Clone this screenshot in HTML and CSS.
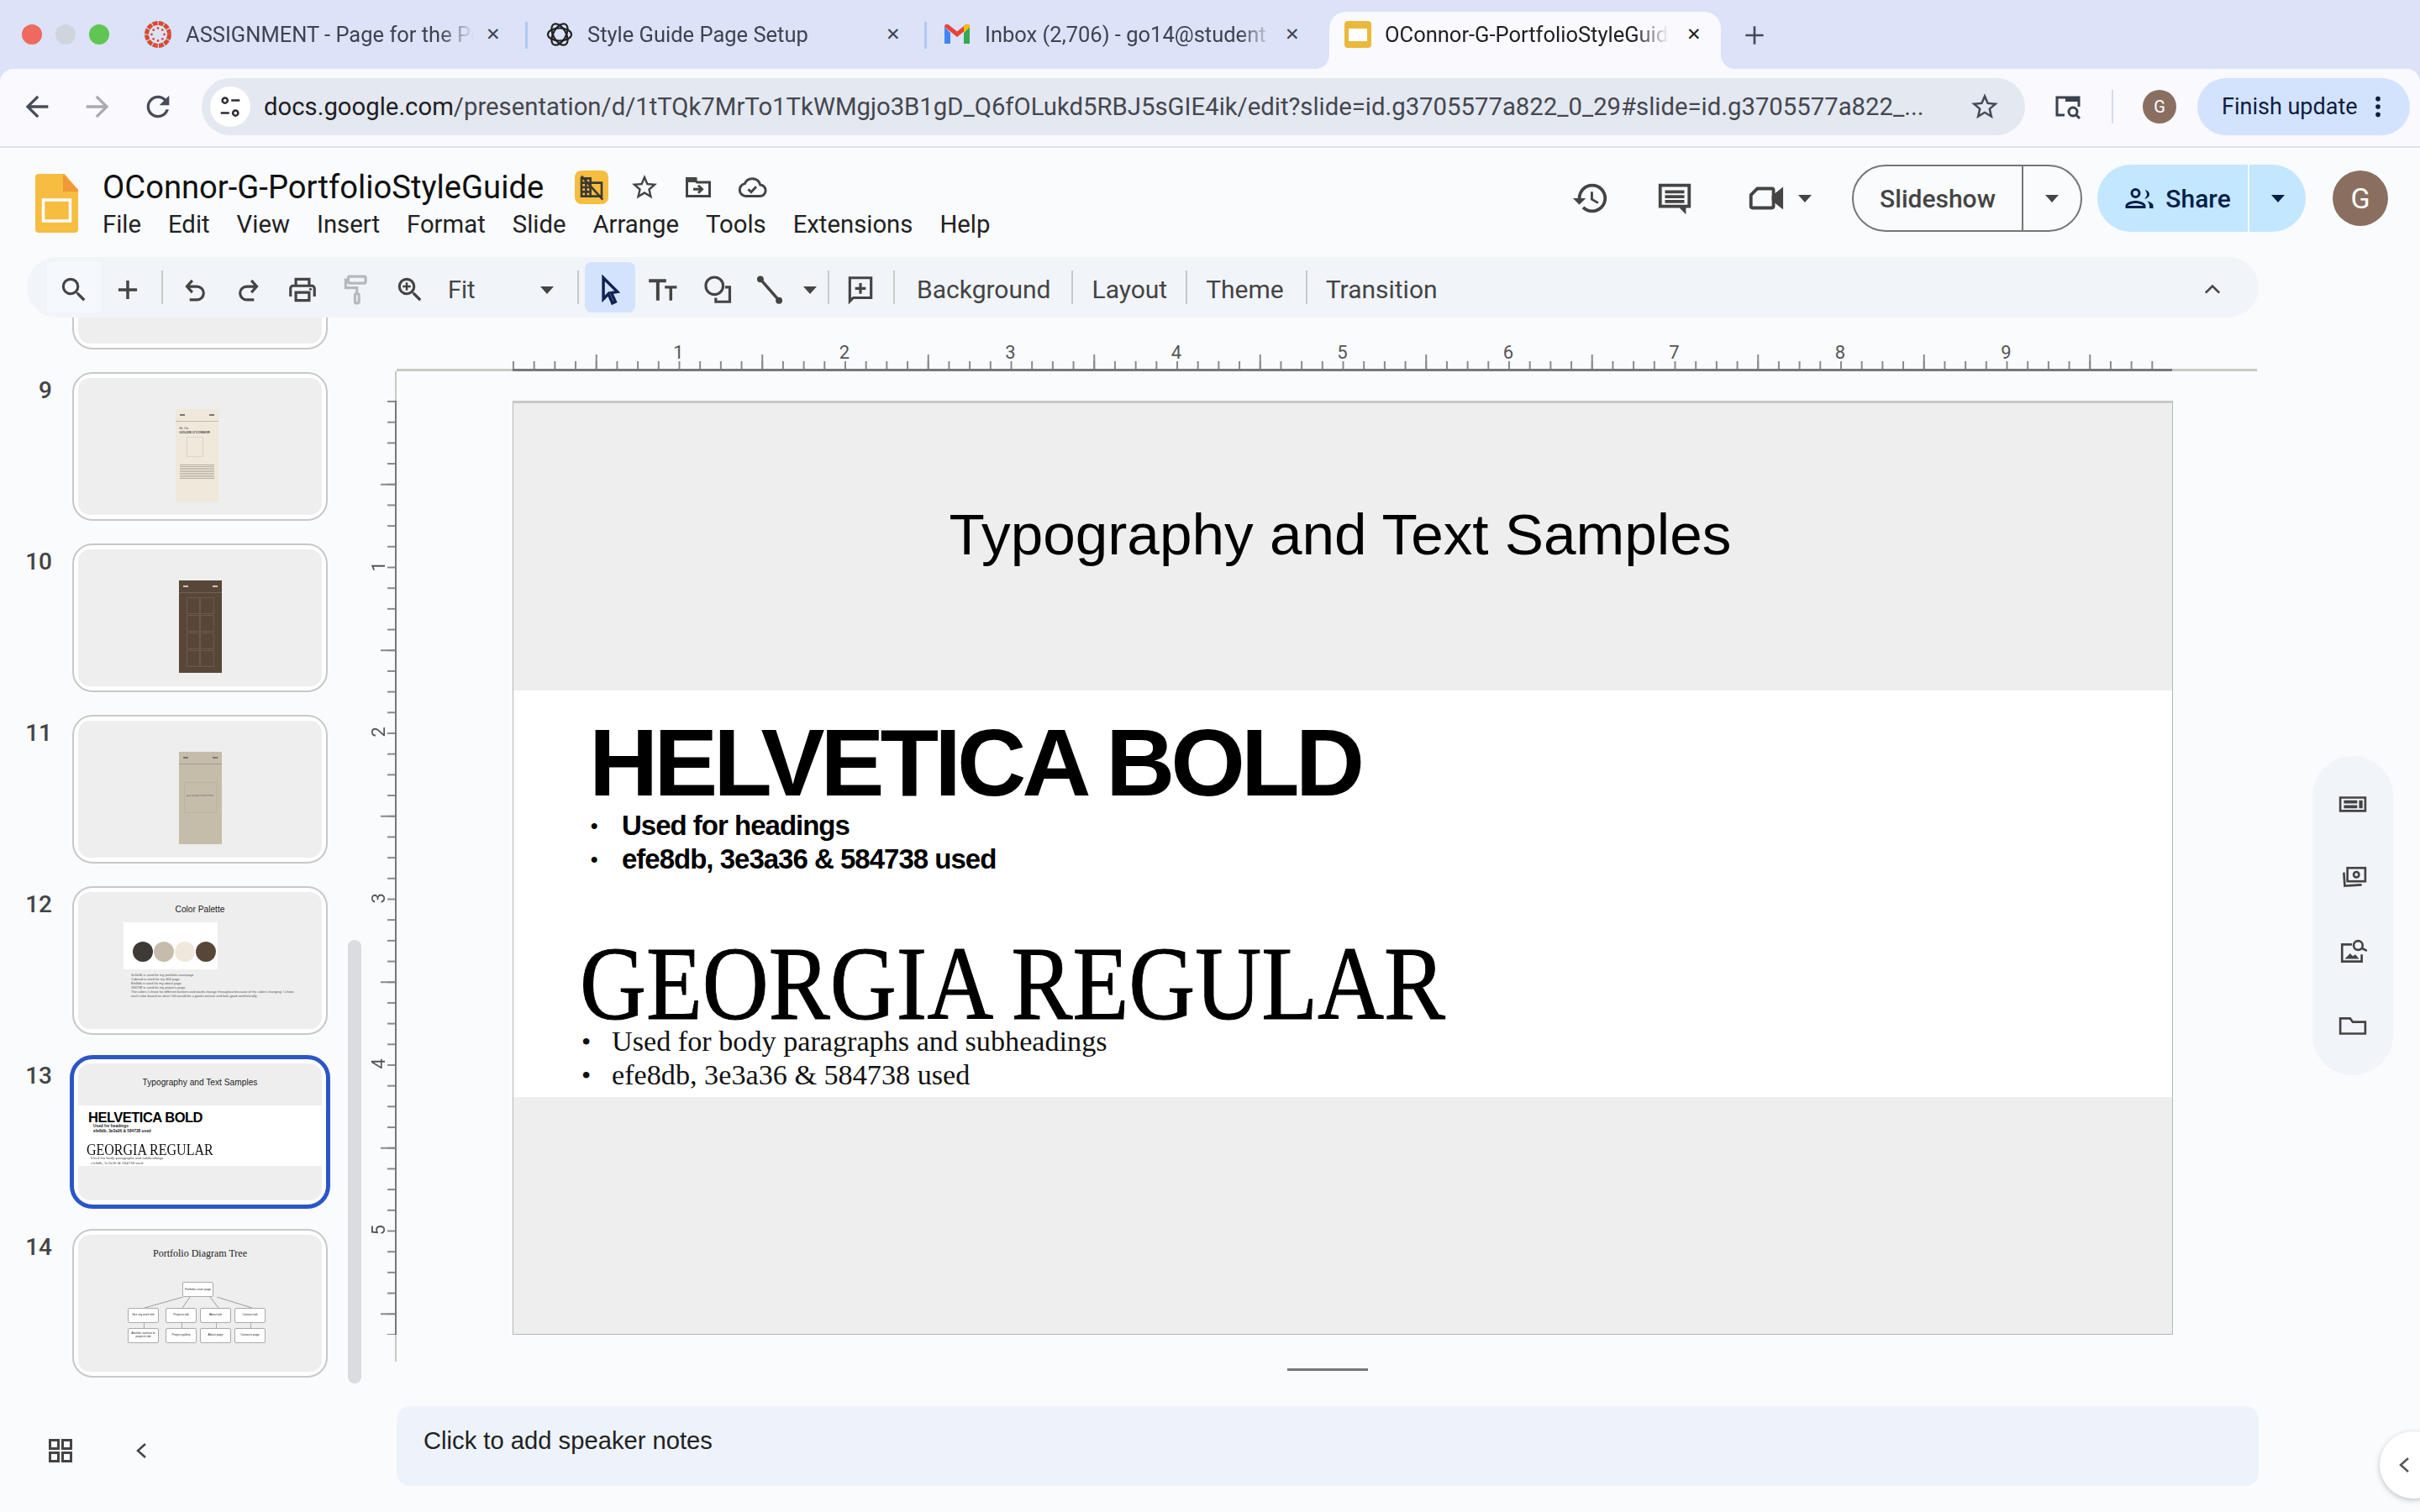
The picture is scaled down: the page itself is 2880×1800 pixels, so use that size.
FILE: index.html
```html
<!DOCTYPE html>
<html lang="en">
<head>
    <meta charset="UTF-8">
    <title>OConnor-G-PortfolioStyleGuide</title>
    <link rel="stylesheet" href="styles.css">
</head>
<body>
    <div class="tabstrip">
        <div class="lights">
            <span class="light red"></span>
            <span class="light gray"></span>
            <span class="light green"></span>
        </div>
        <div class="tab tab-one">
            <svg class="favicon" viewBox="0 0 32 32">
                <circle cx="16" cy="16" r="13.5" fill="none" stroke="#d64b32" stroke-width="5" stroke-dasharray="6 1.1"/>
                <circle cx="16" cy="8.5" r="1.4" fill="#d64b32"/><circle cx="16" cy="23.5" r="1.4" fill="#d64b32"/>
                <circle cx="8.5" cy="16" r="1.4" fill="#d64b32"/><circle cx="23.5" cy="16" r="1.4" fill="#d64b32"/>
                <circle cx="10.7" cy="10.7" r="1.4" fill="#d64b32"/><circle cx="21.3" cy="10.7" r="1.4" fill="#d64b32"/>
                <circle cx="10.7" cy="21.3" r="1.4" fill="#d64b32"/><circle cx="21.3" cy="21.3" r="1.4" fill="#d64b32"/>
            </svg>
            <span class="tab-title">ASSIGNMENT - Page for the Portfolio</span>
            <span class="tab-close">&#10005;</span>
        </div>
        <span class="tab-sep"></span>
        <div class="tab tab-two">
            <svg class="favicon" viewBox="0 0 32 32" fill="none" stroke="#222" stroke-width="2.2">
                <ellipse cx="16" cy="16" rx="14" ry="7.5"/>
                <ellipse cx="16" cy="16" rx="14" ry="7.5" transform="rotate(60 16 16)"/>
                <ellipse cx="16" cy="16" rx="14" ry="7.5" transform="rotate(120 16 16)"/>
            </svg>
            <span class="tab-title">Style Guide Page Setup</span>
            <span class="tab-close">&#10005;</span>
        </div>
        <span class="tab-sep"></span>
        <div class="tab tab-three">
            <svg class="favicon" viewBox="0 0 32 32">
                <path d="M1 7v20h7V14z" fill="#4285f4"/>
                <path d="M24 14v13h7V7z" fill="#34a853"/>
                <path d="M1 7c0-3 3-4 5-2.500l10 8 10-8c2-1.500 5-.5 5 2.500l-15 12z" fill="#ea4335"/>
                <path d="M24 5.500l2-1c2-1.500 5-.5 5 2.500l-7 7z" fill="#fbbc04"/>
            </svg>
            <span class="tab-title">Inbox (2,706) - go14@student</span>
            <span class="tab-close">&#10005;</span>
        </div>
        <div class="tab tab-active">
            <svg class="favicon" viewBox="0 0 32 32">
                <rect width="32" height="32" rx="4" fill="#eab93b"/>
                <rect x="5" y="9" width="22" height="15" fill="#fff"/>
            </svg>
            <span class="tab-title">OConnor-G-PortfolioStyleGuide</span>
            <span class="tab-close dark">&#10005;</span>
        </div>
        <span class="tab-new">
            <svg viewBox="0 0 24 24" width="32" height="32"><path d="M12 4v16M4 12h16" stroke="#444a57" stroke-width="2"/></svg>
        </span>
    </div>

    <div class="browserbar">
        <svg class="nav-icon" viewBox="0 0 24 24"><path fill="#474c58" d="M20 11H7.830l5.590-5.590L12 4l-8 8 8 8 1.410-1.410L7.830 13H20z"/></svg>
        <svg class="nav-icon" viewBox="0 0 24 24"><path fill="#a9abb0" d="M12 4l-1.410 1.410L16.170 11H4v2h12.170l-5.580 5.590L12 20l8-8z"/></svg>
        <svg class="nav-icon" viewBox="0 0 24 24"><path fill="#474c58" d="M17.650 6.350A7.958 7.958 0 0 0 12 4c-4.420 0-7.990 3.580-7.990 8s3.570 8 7.990 8c3.730 0 6.840-2.550 7.730-6h-2.080A5.990 5.990 0 0 1 12 18c-3.310 0-6-2.690-6-6s2.690-6 6-6c1.660 0 3.140.69 4.220 1.780L13 11h7V4z"/></svg>
        <div class="omnibox">
            <span class="site-info">
                <svg viewBox="0 0 24 24" width="30" height="30" fill="none" stroke="#2b2d33" stroke-width="2">
                    <circle cx="7" cy="6" r="2.500"/><path d="M13 6h8M3 18h8"/><circle cx="17" cy="18" r="2.500"/>
                </svg>
            </span>
            <span class="url"><b>docs.google.com</b>/presentation/d/1tTQk7MrTo1TkWMgjo3B1gD_Q6fOLukd5RBJ5sGIE4ik/edit?slide=id.g3705577a822_0_29#slide=id.g3705577a822_...</span>
            <svg class="star" viewBox="0 0 24 24"><path fill="#444a57" d="M22 9.240l-7.190-.62L12 2 9.190 8.630 2 9.240l5.460 4.730L5.820 21 12 17.270 18.180 21l-1.630-7.030zM12 15.400l-3.760 2.270 1-4.280-3.320-2.880 4.380-.38L12 6.100l1.710 4.040 4.380.38-3.320 2.880 1 4.280z"/></svg>
        </div>
        <svg class="tabsearch" viewBox="0 0 36 36" fill="none" stroke="#3b414e" stroke-width="3">
            <path d="M14 28H5V7h26v11"/><path d="M15 7h16v5H15z" fill="#3b414e" stroke="none"/><circle cx="24" cy="24" r="5"/><path d="M28 28l4 4"/>
        </svg>
        <span class="bar-sep"></span>
        <span class="avatar small">G</span>
        <div class="finish">
            <span>Finish update</span>
            <svg viewBox="0 0 8 32" width="8" height="30" fill="#0f1c3f"><circle cx="4" cy="6" r="3"/><circle cx="4" cy="16" r="3"/><circle cx="4" cy="26" r="3"/></svg>
        </div>
    </div>

    <header class="docheader">
        <svg class="slides-logo" viewBox="0 0 51 70">
            <path d="M4 0h31l16 19v47a4 4 0 0 1-4 4H4a4 4 0 0 1-4-4V4a4 4 0 0 1 4-4z" fill="#f6bd41"/>
            <path d="M33 0l18 19v2H33z" fill="#ef9a36"/>
            <rect x="9.500" y="31" width="32" height="25" fill="none" stroke="#fff" stroke-width="3.500"/>
        </svg>
        <div class="doc-info">
            <div class="doc-title-row">
                <span class="doc-title">OConnor-G-PortfolioStyleGuide</span>
                <span class="badge">
                    <svg viewBox="0 0 24 24" width="32" height="32"><path fill="#3c3a2f" d="M12 7V3H2v18h20V7zM6 19H4v-2h2zm0-4H4v-2h2zm0-4H4V9h2zm0-4H4V5h2zm4 12H8v-2h2zm0-4H8v-2h2zm0-4H8V9h2zm0-4H8V5h2zm10 12h-8V9h8z"/><path d="M3 2l19 21" stroke="#3c3a2f" stroke-width="2"/></svg>
                </span>
                <svg class="title-icon" viewBox="0 0 24 24"><path fill="#444" d="M22 9.240l-7.190-.62L12 2 9.190 8.630 2 9.240l5.460 4.730L5.820 21 12 17.270 18.180 21l-1.630-7.030zM12 15.400l-3.760 2.270 1-4.280-3.320-2.880 4.380-.38L12 6.100l1.710 4.040 4.380.38-3.320 2.880 1 4.280z"/></svg>
                <svg class="title-icon" viewBox="0 0 24 24" fill="none" stroke="#444" stroke-width="2"><path d="M3 6h6l2 2h10v11H3z"/><path d="M3 5h7v2H3z" fill="#444"/><path d="M8 13.500h7M12 10.500l3 3-3 3"/></svg>
                <svg class="title-icon" viewBox="0 0 24 24" fill="none" stroke="#444" stroke-width="2"><path d="M7 19a5 5 0 0 1-.8-9.900A6.500 6.500 0 0 1 18.500 10a4.500 4.500 0 0 1-.5 9z"/><path d="M9 13.500l2.300 2.300 4-4.300"/></svg>
            </div>
            <nav class="menu">
                <span>File</span><span>Edit</span><span>View</span><span>Insert</span><span>Format</span><span>Slide</span><span>Arrange</span><span>Tools</span><span>Extensions</span><span>Help</span>
            </nav>
        </div>
        <div class="doc-actions">
            <svg class="action-icon" viewBox="0 0 24 24"><path fill="#444" d="M13 3a9 9 0 0 0-9 9H1l3.890 3.890.07.14L9 12H6c0-3.870 3.130-7 7-7s7 3.130 7 7-3.130 7-7 7c-1.930 0-3.680-.79-4.940-2.060l-1.420 1.420A8.954 8.954 0 0 0 13 21a9 9 0 0 0 0-18zm-1 5v5l4.280 2.540.72-1.210-3.500-2.080V8z"/></svg>
            <svg class="action-icon comment" viewBox="0 0 24 24"><path fill="#444" d="M2 3h20v15h-3v4l-4-4H2zm2 2v11h16V5zm2 2h12v2H6zm0 3h12v2H6zm0 3h12v2H6z"/></svg>
            <svg class="action-icon meet" viewBox="0 0 24 24" fill="none" stroke="#444" stroke-width="2"><path d="M7 6h9a1 1 0 0 1 1 1v10a1 1 0 0 1-1 1H4a1 1 0 0 1-1-1V10z"/><path d="M17 11l5-4v10l-5-4z" fill="#444"/></svg>
            <span class="caret meet-caret"></span>
            <div class="split slideshow">
                <span class="split-main">Slideshow</span>
                <span class="split-side"><span class="caret"></span></span>
            </div>
            <div class="split share">
                <span class="split-main">
                    <svg viewBox="0 0 24 24" width="36" height="36"><path fill="#041e49" d="M9 12a4 4 0 1 0 0-8 4 4 0 0 0 0 8zm0-6a2 2 0 1 1 0 4 2 2 0 0 1 0-4zm0 8c-2.700 0-8 1.340-8 4v2h16v-2c0-2.660-5.300-4-8-4zm-6 4c.22-.72 3.310-2 6-2s5.800 1.290 6 2zm13-5.500c1.800 0 4-1.700 4-3.500s-1.800-3.500-3.500-3.500c1 1 1.500 2.300 1.500 3.500s-.9 2.700-2 3.500zm2 1.800c1.300.9 2 2 2 3.700v2h3v-2c0-2.300-3-3.400-5-3.700z"/></svg>
                    Share
                </span>
                <span class="split-side"><span class="caret"></span></span>
            </div>
            <span class="avatar">G</span>
        </div>
    </header>

    <div class="edit-toolbar">
        <button class="tb-btn tb-search"><svg viewBox="0 0 24 24"><path fill="#444" d="M15.500 14h-.79l-.28-.27A6.471 6.471 0 0 0 16 9.500 6.500 6.500 0 1 0 9.500 16c1.610 0 3.090-.59 4.230-1.570l.27.28v.79l5 4.990L20.490 19zm-6 0C7.010 14 5 11.990 5 9.500S7.010 5 9.500 5 14 7.010 14 9.500 11.990 14 9.500 14z"/></svg></button>
        <button class="tb-btn"><svg viewBox="0 0 24 24"><path d="M12 5v14M5 12h14" stroke="#444" stroke-width="2.200"/></svg></button>
        <span class="tb-sep first"></span>
        <button class="tb-btn"><svg viewBox="0 0 24 24" fill="none" stroke="#444" stroke-width="2"><path d="M10 5L6 9.500l4 4.500M6 9.500h7.500a5 5 0 0 1 0 10H8"/></svg></button>
        <button class="tb-btn"><svg viewBox="0 0 24 24" fill="none" stroke="#444" stroke-width="2"><path d="M14 5l4 4.500-4 4.500M18 9.500h-7.500a5 5 0 0 0 0 10H16"/></svg></button>
        <button class="tb-btn"><svg viewBox="0 0 24 24"><path fill="#444" d="M19 8h-1V3H6v5H5c-1.660 0-3 1.340-3 3v6h4v4h12v-4h4v-6c0-1.660-1.340-3-3-3zM8 5h8v3H8zm8 14H8v-4h8zm2-2v-4H6v4H4v-6c0-.55.45-1 1-1h14c.55 0 1 .45 1 1v6z"/><circle cx="18" cy="11.500" r="1" fill="#444"/></svg></button>
        <button class="tb-btn"><svg viewBox="0 0 24 24" fill="none" stroke="#b5b8bc" stroke-width="2"><rect x="6" y="2" width="13" height="5" rx="1"/><path d="M6 4.500H4v6h8.500v4"/><rect x="11" y="15" width="3" height="7" rx="1"/></svg></button>
        <button class="tb-btn"><svg viewBox="0 0 24 24"><path fill="#444" d="M15.500 14h-.79l-.28-.27A6.471 6.471 0 0 0 16 9.500 6.500 6.500 0 1 0 9.500 16c1.610 0 3.090-.59 4.230-1.570l.27.28v.79l5 4.990L20.490 19zm-6 0C7.010 14 5 11.990 5 9.500S7.010 5 9.500 5 14 7.010 14 9.500 11.990 14 9.500 14z"/><path d="M9.500 6.500v6M6.500 9.500h6" stroke="#444" stroke-width="1.600"/></svg></button>
        <div class="zoom-select"><span>Fit</span><span class="caret"></span></div>
        <span class="tb-sep second"></span>
        <button class="tb-btn active"><svg viewBox="0 0 24 24"><path fill="#d3e3fd" stroke="#0f2350" stroke-width="2.200" d="M7 3l10.500 10.500-4.500.8 3 6.700-2.200 1-3-6.900L7 19z"/></svg></button>
        <button class="tb-btn"><svg viewBox="0 0 24 24"><path fill="#444" d="M2 4h13v2.500h-5V20H7.500V6.500H2zm12 5h9v2h-3.400v9h-2.200v-9H14z"/></svg></button>
        <button class="tb-btn shape-btn"><svg viewBox="0 0 24 24" fill="none" stroke="#444" stroke-width="2"><circle cx="9" cy="9" r="6.500"/><path d="M17 10h3.500v11H10v-3"/></svg></button>
        <button class="tb-btn"><svg viewBox="0 0 24 24" fill="none" stroke="#444"><path d="M5 4l14 16" stroke-width="2.200"/><circle cx="5" cy="4" r="2" fill="#444"/><circle cx="19" cy="20" r="2" fill="#444"/></svg></button>
        <span class="caret line-caret"></span>
        <span class="tb-sep third"></span>
        <button class="tb-btn comment-add"><svg viewBox="0 0 24 24"><path fill="#444" d="M3 2h18v17H7l-4 4zm2 2v14l1.500-1H19V4zm6 3h2v3h3v2h-3v3h-2v-3H8v-2h3z"/></svg></button>
        <span class="tb-sep fourth"></span>
        <span class="tb-text bg">Background</span>
        <span class="tb-sep"></span>
        <span class="tb-text">Layout</span>
        <span class="tb-sep"></span>
        <span class="tb-text theme">Theme</span>
        <span class="tb-sep"></span>
        <span class="tb-text">Transition</span>
        <svg class="collapse" viewBox="0 0 24 24"><path d="M5 16l7-7 7 7" fill="none" stroke="#444" stroke-width="2.200"/></svg>
    </div>

    <div class="workspace">
        <aside class="filmstrip">
            <div class="film-scroll">
                <div class="film-row cut"><span class="film-num"></span><div class="thumb"><div class="thumb-inner"></div></div></div>
                <div class="film-row">
                    <span class="film-num">9</span>
                    <div class="thumb"><div class="thumb-inner mobile-wrap nudge">
                        <div class="mobile cream">
                            <i class="m-head"></i>
                            <p class="m-title">Hi, I'm<br><b>GOLDIE O'CONNOR</b></p>
                            <i class="m-box"></i>
                            <i class="m-lines"></i>
                        </div>
                    </div></div>
                </div>
                <div class="film-row">
                    <span class="film-num">10</span>
                    <div class="thumb"><div class="thumb-inner mobile-wrap">
                        <div class="mobile brown">
                            <i class="m-head"></i>
                            <div class="m-grid"><i></i><i></i><i></i><i></i><i></i><i></i><i></i><i></i></div>
                        </div>
                    </div></div>
                </div>
                <div class="film-row">
                    <span class="film-num">11</span>
                    <div class="thumb"><div class="thumb-inner mobile-wrap">
                        <div class="mobile tan">
                            <i class="m-head"></i>
                            <p class="m-card">you can get in touch here</p>
                        </div>
                    </div></div>
                </div>
                <div class="film-row">
                    <span class="film-num">12</span>
                    <div class="thumb"><div class="thumb-inner palette">
                        <p class="mini-title">Color Palette</p>
                        <div class="swatches">
                            <i class="sw-a"></i><i class="sw-b"></i><i class="sw-c"></i><i class="sw-d"></i>
                        </div>
                        <ul class="mini-list">
                            <li>3e3a36 is used for my portfolio coverpage</li>
                            <li>Cabead is used for my 404 page</li>
                            <li>Efe8db is used for my about page</li>
                            <li>584738 is used for my projects page</li>
                            <li>The colors I chose for different buttons and words change throughout because of the colors changing. I chose each color based on what I felt would be a good contrast and look good aesthetically.</li>
                        </ul>
                    </div></div>
                </div>
                <div class="film-row">
                    <span class="film-num">13</span>
                    <div class="thumb selected"><div class="thumb-inner typo">
                        <p class="mini-title">Typography and Text Samples</p>
                        <div class="typo-band">
                            <p class="mini-helv">HELVETICA BOLD</p>
                            <ul class="mini-bul">
                                <li>Used for headings</li>
                                <li>efe8db, 3e3a36 &amp; 584738 used</li>
                            </ul>
                            <p class="mini-geo">GEORGIA REGULAR</p>
                            <ul class="mini-bul-serif">
                                <li>Used for body paragraphs and subheadings</li>
                                <li>efe8db, 3e3a36 &amp; 584738 used</li>
                            </ul>
                        </div>
                    </div></div>
                </div>
                <div class="film-row">
                    <span class="film-num">14</span>
                    <div class="thumb"><div class="thumb-inner tree">
                        <p class="mini-title serif">Portfolio Diagram Tree</p>
                        <div class="tree-root">Portfolio cover page</div>
                        <svg class="tree-lines" viewBox="0 0 170 13" fill="none" stroke="#666" stroke-width=".6">
                            <path d="M66 0L20 13M74 0L65 13M98 0L108 13M106 0L148 13"/>
                        </svg>
                        <div class="tree-row"><span>See my work link</span><span>Projects tab</span><span>About tab</span><span>Contact tab</span></div>
                        <div class="tree-row second"><span>Another avenue to projects tab</span><span>Project gallery</span><span>About page</span><span>Contacts page</span></div>
                    </div></div>
                </div>
            </div>
            <i class="film-scrollbar"></i>
            <div class="film-foot">
                <svg viewBox="0 0 28 28" width="28" height="28" fill="none" stroke="#444" stroke-width="3"><rect x="1.500" y="1.500" width="10" height="10"/><rect x="16.500" y="1.500" width="10" height="10"/><rect x="1.500" y="16.500" width="10" height="10"/><rect x="16.500" y="16.500" width="10" height="10"/></svg>
                <svg class="foot-back" viewBox="0 0 14 20" width="14" height="20" fill="none" stroke="#444" stroke-width="2.500"><path d="M12 2L3 10l9 8"/></svg>
            </div>
        </aside>

        <main class="canvas">
            <div class="hruler">
                <div class="hscale">
                    <span>1</span><span>2</span><span>3</span><span>4</span><span>5</span><span>6</span><span>7</span><span>8</span><span>9</span>
                </div>
            </div>
            <div class="stage">
                <div class="vruler">
                    <div class="vscale">
                        <span>1</span><span>2</span><span>3</span><span>4</span><span>5</span>
                    </div>
                </div>
                <section class="slide">
                    <div class="slide-head"><h1>Typography and Text Samples</h1></div>
                    <div class="slide-band">
                        <h2 class="helv">HELVETICA BOLD</h2>
                        <ul class="helv-list">
                            <li>Used for headings</li>
                            <li>efe8db, 3e3a36 &amp; 584738 used</li>
                        </ul>
                        <h2 class="geo">GEORGIA REGULAR</h2>
                        <ul class="geo-list">
                            <li>Used for body paragraphs and subheadings</li>
                            <li>efe8db, 3e3a36 &amp; 584738 used</li>
                        </ul>
                    </div>
                </section>
            </div>
            <i class="notes-handle"></i>
            <div class="notes">Click to add speaker notes</div>
        </main>

        <aside class="sidepanel">
            <svg viewBox="0 0 32 32"><path fill="none" stroke="#444" stroke-width="2.500" d="M2 8h28v15H2z"/><path fill="#444" d="M6 11h15v3.500H6zM6 16.500h15V20H6zM23 11h4v9h-4z"/></svg>
            <svg viewBox="0 0 32 32" fill="none" stroke="#444" stroke-width="2.500"><rect x="10" y="4" width="20" height="15"/><circle cx="20" cy="11.500" r="3"/><path d="M6 9l1 15 19-1"/></svg>
            <svg viewBox="0 0 32 32" fill="none" stroke="#444" stroke-width="2.500"><path d="M15 7H4v19h22v-8"/><circle cx="22" cy="8" r="5"/><path d="M26 11l6 3"/><path d="M7 23l6-6 3 3 3-2 4 5z" fill="#444" stroke="none"/></svg>
            <svg viewBox="0 0 32 32" fill="none" stroke="#444" stroke-width="2.500"><path d="M2 7h11l3 4h14v13H2z"/></svg>
        </aside>
        <span class="side-toggle"><svg viewBox="0 0 14 20" width="14" height="20" fill="none" stroke="#555" stroke-width="2.500"><path d="M12 2L3 10l9 8"/></svg></span>
    </div>
</body>
</html>
```

FILE: styles.css
```css
* {
    box-sizing: border-box;
}
html, body {
    margin: 0;
    padding: 0;
}
body {
    width: 2880px;
    height: 1800px;
    overflow: hidden;
    background-color: #f9fbfd;
    font-family: Roboto, "Liberation Sans", sans-serif;
    color: #1f1f1f;
}
i {
    display: block;
}

/* browser tabs */
.tabstrip {
    height: 98px;
    background-color: #dce2f7;
    display: flex;
    align-items: flex-end;
    padding: 0 0 16px 26px;
}
.lights {
    display: flex;
    gap: 16px;
    width: 146px;
    height: 58px;
    padding-top: 5px;
}
.light {
    width: 24px;
    height: 24px;
    border-radius: 50%;
}
.red { background-color: #ee6a5f; }
.gray { background-color: #d0d4dd; }
.green { background-color: #61c554; }
.tab {
    height: 68px;
    padding: 0 0 14px 0;
    display: flex;
    align-items: center;
    font-size: 25.500px;
    color: #3e4350;
}
.tab-one { width: 453px; }
.tab-two { width: 450px; }
.tab-three { width: 474px; }
.favicon {
    width: 32px;
    height: 32px;
    flex: none;
}
.tab-title {
    margin-left: 17px;
    width: 343px;
    white-space: nowrap;
    overflow: hidden;
    -webkit-mask-image: linear-gradient(to right, #000 88%, transparent);
    mask-image: linear-gradient(to right, #000 88%, transparent);
}
.tab-two .tab-title { width: 341px; }
.tab-three .tab-title { width: 343px; }
.tab-close {
    font-size: 21px;
    margin-left: 14px;
    color: #3e4350;
}
.tab-close.dark { color: #1f1f1f; }
.tab-sep {
    width: 3px;
    height: 32px;
    margin: 0 0 24px 0;
    background-color: #b4c7f0;
    flex: none;
}
.tab-one + .tab-sep { margin-right: 22px; }
.tab-two + .tab-sep { margin-right: 20px; }
.tab-active {
    position: relative;
    width: 466px;
    margin-left: -15px;
    padding: 0 0 14px 18px;
    background-color: #f9f9fe;
    border-radius: 20px 20px 0 0;
    color: #1f1f1f;
}
.tab-active::before,
.tab-active::after {
    content: "";
    position: absolute;
    bottom: 0;
    width: 16px;
    height: 16px;
}
.tab-active::before {
    left: -16px;
    background: radial-gradient(circle at 0 0, transparent 15.500px, #f9f9fe 16px);
}
.tab-active::after {
    right: -16px;
    background: radial-gradient(circle at 100% 0, transparent 15.500px, #f9f9fe 16px);
}
.tab-active .tab-title { width: 338px; margin: 0 7px 0 16px; }
.tab-new {
    margin: 0 0 24px 24px;
    display: flex;
}

/* address bar */
.browserbar {
    position: relative;
    height: 94px;
    margin-top: -16px;
    background-color: #f9f9fe;
    border-bottom: 2px solid #dfe3ea;
    border-radius: 16px 16px 0 0;
    display: flex;
    align-items: center;
    padding: 0 12px 2px 24px;
}
.nav-icon {
    width: 40px;
    height: 40px;
    margin-right: 32px;
    flex: none;
}
.omnibox {
    width: 2170px;
    height: 68px;
    border-radius: 34px;
    background-color: #e4e8f1;
    display: flex;
    align-items: center;
    padding-left: 10px;
}
.site-info {
    width: 48px;
    height: 48px;
    border-radius: 50%;
    background-color: #fff;
    display: flex;
    align-items: center;
    justify-content: center;
    flex: none;
}
.url {
    margin-left: 16px;
    width: 1991px;
    font-size: 29.300px;
    white-space: nowrap;
    color: #44474e;
    overflow: hidden;
}
.url b {
    font-weight: 400;
    color: #1f1f1f;
}
.star {
    width: 38px;
    height: 38px;
    margin-left: 38px;
    flex: none;
}
.tabsearch {
    width: 36px;
    height: 36px;
    margin-left: 33px;
    flex: none;
}
.bar-sep {
    width: 2px;
    height: 40px;
    margin-left: 34px;
    background-color: #d3dcec;
}
.avatar {
    width: 66px;
    height: 66px;
    border-radius: 50%;
    background-color: #8a6f61;
    color: #fff;
    font-size: 34px;
    display: flex;
    align-items: center;
    justify-content: center;
    flex: none;
}
.avatar.small {
    width: 40px;
    height: 40px;
    font-size: 20px;
    margin-left: 35px;
}
.finish {
    width: 253px;
    height: 68px;
    margin-left: 25px;
    border-radius: 34px;
    background-color: #d3e3fd;
    color: #0f1c3f;
    font-size: 27px;
    display: flex;
    align-items: center;
    padding-left: 29px;
    gap: 20px;
}

/* document header */
.docheader {
    height: 130px;
    display: flex;
    padding: 27px 38px 0 42px;
}
.slides-logo {
    width: 51px;
    height: 70px;
    margin-top: 4px;
    flex: none;
}
.doc-info {
    margin-left: 29px;
}
.doc-title-row {
    height: 40px;
    display: flex;
    align-items: center;
}
.doc-title {
    font-size: 38.200px;
    width: 562px;
    color: #111;
    white-space: nowrap;
}
.badge {
    width: 40px;
    height: 40px;
    border-radius: 8px;
    background-color: #f6bd41;
    display: flex;
    align-items: center;
    justify-content: center;
}
.title-icon {
    width: 36px;
    height: 36px;
    margin-left: 28px;
}
.badge + .title-icon { margin-left: 25px; }
.menu {
    display: flex;
    font-size: 29.300px;
    margin-top: 4px;
    line-height: 40px;
    color: #222;
}
.menu span {
    margin-right: 32px;
}
.doc-actions {
    margin-left: auto;
    display: flex;
    align-items: center;
    height: 80px;
    margin-top: -7px;
}
.action-icon {
    width: 46px;
    height: 46px;
    margin-right: 54px;
}
.action-icon.comment { margin-right: 62px; }
.action-icon.meet { margin-right: 16px; }
.caret {
    display: block;
    width: 0;
    height: 0;
    border-left: 8px solid transparent;
    border-right: 8px solid transparent;
    border-top: 9px solid #444;
    flex: none;
}
.meet-caret { margin-right: 48px; }
.split {
    height: 80px;
    border-radius: 40px;
    display: flex;
    align-items: stretch;
    font-size: 30px;
    font-weight: 500;
}
.split-main {
    display: flex;
    align-items: center;
    justify-content: center;
}
.split-side {
    display: flex;
    align-items: center;
    justify-content: center;
}
.slideshow {
    width: 274px;
    border: 2px solid #747775;
    color: #444;
}
.slideshow .split-main {
    width: 202px;
    border-right: 2px solid #747775;
}
.slideshow .split-side { flex: 1; }
.share {
    width: 248px;
    margin-left: 18px;
    background-color: #c2e7ff;
    color: #041e49;
}
.share .split-main {
    width: 181px;
    gap: 13px;
    padding-left: 12px;
    border-right: 2px solid #f9fbfd;
}
.share .split-side { flex: 1; }
.share .caret { border-top-color: #041e49; }
.doc-actions > .avatar { margin-left: 32px; }

/* editing toolbar */
.edit-toolbar {
    width: 2656px;
    height: 72px;
    margin-left: 32px;
    border-radius: 36px;
    background-color: #f1f4f9;
    display: flex;
    align-items: center;
    padding: 0 0 0 24px;
}
.tb-btn {
    width: 64px;
    height: 60px;
    padding: 6px 0 0;
    border: none;
    background: none;
    display: flex;
    align-items: center;
    justify-content: center;
    flex: none;
}
.tb-btn svg {
    width: 38px;
    height: 38px;
}
.tb-btn.tb-search {
    width: 64px;
    background-color: #f5f8fc;
}
.tb-btn.active {
    width: 60px;
    background-color: #d3e3fd;
    border-radius: 8px;
}
.tb-btn.shape-btn { padding-left: 6px; }
.tb-sep {
    width: 2px;
    height: 40px;
    background-color: #c7c9cc;
    flex: none;
}
.tb-sep.first { margin: 0 6px 0 8px; }
.tb-sep.second { margin: 0 7px 0 28px; }
.tb-sep.third { margin: 0 5px 0 13px; }
.tb-sep.fourth { margin-left: 7px; }
.zoom-select {
    width: 139px;
    padding: 6px 0 0 13px;
    display: flex;
    align-items: center;
    justify-content: space-between;
    font-size: 29px;
    color: #444;
    flex: none;
}
.line-caret { margin: 6px 0 0 8px; }
.tb-text {
    font-size: 30px;
    color: #444;
    padding: 4px 22px 0;
    white-space: nowrap;
}
.tb-text.bg { padding: 4px 25px 0 26px; }
.tb-text.theme { padding: 4px 26px 0 22px; }
.collapse {
    width: 28px;
    height: 28px;
    margin: 4px 41px 0 auto;
}

/* workspace */
.workspace {
    position: relative;
    height: 1422px;
    display: flex;
}
.filmstrip {
    position: relative;
    width: 440px;
    flex: none;
}
.film-scroll {
    height: 1272px;
    padding-top: 14px;
    overflow: hidden;
}
.film-row {
    display: flex;
    height: 177px;
    margin-bottom: 27px;
}
.film-row.cut {
    margin-top: -153px;
}
.film-num {
    width: 62px;
    margin-right: 24px;
    padding-top: 2px;
    text-align: right;
    font-size: 28px;
    font-weight: 500;
    line-height: 40px;
    color: #444;
}
.thumb {
    width: 304px;
    height: 177px;
    border: 2px solid #c7c9c7;
    border-radius: 24px;
    background-color: #fff;
    padding: 5px;
}
.thumb.selected {
    border-color: #2a56c6;
    box-shadow: 0 0 0 3px #2a56c6;
}
.thumb-inner {
    height: 100%;
    border-radius: 14px;
    background-color: #eee;
    overflow: hidden;
}
.film-scrollbar {
    position: absolute;
    left: 414px;
    top: 741px;
    width: 16px;
    height: 528px;
    border-radius: 8px;
    background-color: #dadce0;
}
.film-foot {
    margin-top: 63px;
    padding-left: 58px;
    display: flex;
    align-items: center;
}
.foot-back { margin-left: 75px; }

/* thumbnails */
.mobile-wrap {
    display: flex;
    justify-content: center;
    padding-top: 37px;
}
.mobile-wrap.nudge {
    padding-right: 8px;
}
.mobile {
    width: 51px;
    height: 110px;
    padding: 0 5px;
}
.cream { background-color: #efe8db; }
.brown { background-color: #584738; }
.tan { background-color: #c6bcaa; }
.m-head {
    height: 15px;
    margin: 0 -5px;
    border-bottom: 1px solid rgba(90, 80, 70, 0.3);
    background:
        linear-gradient(#777, #777) no-repeat 5px 6px / 6px 2px,
        linear-gradient(#777, #777) no-repeat right 5px top 6px / 6px 2px;
}
.brown .m-head {
    border-bottom-color: rgba(220, 210, 190, 0.2);
    background:
        linear-gradient(#cfc6b6, #cfc6b6) no-repeat 5px 6px / 6px 2px,
        linear-gradient(#cfc6b6, #cfc6b6) no-repeat right 5px top 6px / 6px 2px;
}
.m-title {
    margin: 6px 0 0;
    font-family: "Liberation Sans", sans-serif;
    font-size: 3.800px;
    line-height: 5px;
    color: #444;
    white-space: nowrap;
}
.m-box {
    width: 20px;
    height: 24px;
    margin: 2px 0 0 8px;
    border: 1px solid #ddd6c8;
}
.m-lines {
    height: 18px;
    margin-top: 9px;
    background: repeating-linear-gradient(#b5aea2 0 1px, transparent 1px 2px);
}
.m-grid {
    display: grid;
    grid-template-columns: 1fr 1fr;
    gap: 1px 0;
    margin-top: 5px;
    padding: 0 4px;
}
.m-grid i {
    height: 20px;
    border: 1px solid #6a5a4a;
}
.m-card {
    height: 37px;
    margin: 21px 1px 0;
    border: 1px solid #bdb3a1;
    font-family: "Liberation Sans", sans-serif;
    font-size: 2.800px;
    line-height: 30px;
    text-align: center;
    color: #666;
    white-space: nowrap;
}
.mini-title {
    margin: 0;
    padding-top: 14px;
    font-family: "Liberation Sans", sans-serif;
    font-size: 10.200px;
    line-height: 14px;
    text-align: center;
    color: #222;
}
.mini-title.serif {
    font-family: "Liberation Serif", serif;
    font-size: 12px;
    padding-top: 15px;
}
.swatches {
    width: 112px;
    height: 56px;
    margin: 8px 0 0 54px;
    padding: 23px 2px 0 11px;
    background-color: #fff;
    display: flex;
    gap: 1px;
}
.swatches i {
    width: 24px;
    height: 24px;
    border-radius: 50%;
}
.sw-a { background-color: #3e3a36; }
.sw-b { background-color: #c6bcab; }
.sw-c { background-color: #efe8db; }
.sw-d { background-color: #584738; }
.mini-list {
    width: 200px;
    margin: 4px 0 0 63px;
    padding: 0;
    list-style: none;
    font-family: "Liberation Sans", sans-serif;
    font-size: 4px;
    line-height: 5px;
    color: #555;
}
.typo .mini-title {
    height: 50px;
    padding-top: 16px;
}
.typo-band {
    height: 72px;
    background-color: #fff;
    padding: 5px 0 0 12px;
}
.mini-helv {
    margin: 0;
    font-family: "Liberation Sans", sans-serif;
    font-weight: 700;
    font-size: 16.500px;
    line-height: 18px;
    color: #000;
    letter-spacing: -0.500px;
    white-space: nowrap;
}
.mini-bul {
    margin: -1px 0 0 6px;
    padding: 0;
    list-style: none;
    font-family: "Liberation Sans", sans-serif;
    font-weight: 700;
    font-size: 4.800px;
    line-height: 6px;
    color: #222;
    white-space: nowrap;
}
.mini-geo {
    margin: 10px 0 0 -2px;
    font-family: "Liberation Serif", serif;
    font-size: 18.300px;
    line-height: 18px;
    color: #111;
    white-space: nowrap;
    transform: scaleX(0.875);
    transform-origin: left center;
}
.mini-bul-serif {
    margin: -2px 0 0 3px;
    padding: 0;
    list-style: none;
    font-family: "Liberation Serif", serif;
    font-size: 5px;
    line-height: 6px;
    color: #444;
    white-space: nowrap;
}
.tree-root {
    width: 37px;
    height: 18px;
    margin: 27px 0 0 124px;
    font-family: "Liberation Sans", sans-serif;
    font-size: 3.500px;
    line-height: 16px;
    text-align: center;
    background-color: #fff;
    border: 1px solid #aaa;
    border-radius: 2px;
    white-space: nowrap;
}
.tree-lines {
    display: block;
    width: 170px;
    height: 13px;
    margin-left: 59px;
}
.tree-row {
    display: flex;
    gap: 4px;
    margin-left: 59px;
}
.tree-row.second { margin-top: 6px; }
.tree-row span {
    position: relative;
    width: 37px;
    height: 18px;
    font-family: "Liberation Sans", sans-serif;
    font-size: 3.500px;
    line-height: 4px;
    padding-top: 5px;
    text-align: center;
    background-color: #fff;
    border: 1px solid #aaa;
    border-radius: 2px;
}
.tree-row span:first-child { margin-right: 4px; }
.tree-row.second span:first-child { padding-top: 3px; }
.tree-row.second span::before {
    content: "";
    position: absolute;
    left: 50%;
    top: -7px;
    width: 1px;
    height: 6px;
    background-color: #aaa;
}

/* slide canvas */
.canvas {
    width: 2248px;
    flex: none;
}
.hruler {
    margin-left: 32px;
    width: 2214px;
    height: 64px;
    border-bottom: 3px solid #c8c9c6;
    padding: 0 0 0 138px;
}
.hscale {
    width: 1975px;
    height: 64px;
    border-bottom: 3px solid #777;
    padding-left: 98.750px;
    padding-top: 31px;
    display: flex;
    background-image:
        linear-gradient(to right, #8a8a8a 2px, transparent 2px),
        linear-gradient(to right, #8a8a8a 2px, transparent 2px);
    background-size: 197.500px 17px, 24.688px 9px;
    background-position: 98.750px 100%, 0 100%;
    background-repeat: repeat-x;
}
.hscale span {
    width: 197.500px;
    text-align: center;
    font-size: 22px;
    line-height: 22px;
    color: #555;
}
.stage {
    display: flex;
    height: 1179px;
}
.vruler {
    width: 32px;
    height: 100%;
    border-right: 2px solid #c8c9c6;
    padding-top: 35px;
    flex: none;
}
.vscale {
    width: 32px;
    height: 1112px;
    border-right: 2px solid #777;
    padding-top: 98.750px;
    background-image:
        linear-gradient(to bottom, #8a8a8a 2px, transparent 2px),
        linear-gradient(to bottom, #8a8a8a 2px, transparent 2px);
    background-size: 17px 197.500px, 9px 24.688px;
    background-position: 100% 98.750px, 100% 0;
    background-repeat: repeat-y;
}
.vscale span {
    display: flex;
    align-items: center;
    justify-content: center;
    width: 20px;
    height: 197.500px;
    writing-mode: vertical-rl;
    transform: rotate(180deg);
    font-size: 22px;
    color: #555;
}
.slide {
    width: 1976px;
    height: 1112px;
    margin: 35px 0 0 138px;
    border: 1px solid #b5b8b8;
    border-top: 3px solid #c8c9c6;
    background-color: #eee;
    font-family: "Liberation Sans", Arial, sans-serif;
    color: #000;
}
.slide-head {
    height: 342px;
    padding-top: 112px;
    text-align: center;
}
.slide-head h1 {
    margin: 0 0 0 -6px;
    font-weight: 400;
    font-size: 69.300px;
    line-height: 88px;
}
.slide-band {
    height: 484px;
    background-color: #fff;
    padding-top: 36px;
}
.helv {
    margin: 0 0 5px 90px;
    font-size: 114px;
    line-height: 100px;
    font-weight: 700;
    letter-spacing: -5px;
    white-space: nowrap;
}
.slide-band ul {
    margin: 0;
    padding: 0;
    list-style: none;
}
.slide-band li {
    display: flex;
    height: 40px;
    line-height: 40px;
    white-space: nowrap;
}
.slide-band li::before {
    content: "\2022";
    font-size: 24px;
}
.helv-list {
    margin-left: 92px !important;
    font-weight: 700;
    font-size: 33px;
    letter-spacing: -1px;
}
.helv-list li::before { width: 37px; }
.geo {
    margin: 68px 0 0 79px;
    font-family: "Liberation Serif", Georgia, serif;
    font-size: 125px;
    font-weight: 400;
    line-height: 120px;
    white-space: nowrap;
    -webkit-text-stroke: 1px #000;
    transform: scaleX(0.875);
    transform-origin: left center;
}
.geo-list {
    margin: -11px 0 0 81px !important;
    font-family: "Liberation Serif", Georgia, serif;
    font-size: 34.200px;
    color: #111;
}
.slide-band .geo-list li::before { width: 36px; font-size: 32px; }
.notes-handle {
    width: 96px;
    height: 3px;
    margin: 8px 0 0 1092px;
    background-color: #777;
}
.notes {
    width: 2216px;
    height: 95px;
    margin: 42px 0 0 32px;
    border-radius: 16px;
    background-color: #eef3fb;
    padding-left: 32px;
    font-family: "Liberation Sans", Arial, sans-serif;
    font-size: 29.200px;
    line-height: 82px;
    color: #222;
}

/* right side panel */
.sidepanel {
    width: 96px;
    height: 380px;
    margin: 522px 0 0 64px;
    border-radius: 48px;
    background-color: #f1f4f9;
    display: flex;
    flex-direction: column;
    align-items: center;
    padding-top: 41px;
    gap: 54px;
    flex: none;
}
.sidepanel svg {
    width: 34px;
    height: 34px;
}
.side-toggle {
    position: absolute;
    right: -32px;
    top: 1326px;
    width: 80px;
    height: 80px;
    border-radius: 50%;
    background-color: #fff;
    box-shadow: 0 2px 6px rgba(60, 64, 67, 0.3);
    display: flex;
    align-items: center;
    padding-left: 22px;
}
```
